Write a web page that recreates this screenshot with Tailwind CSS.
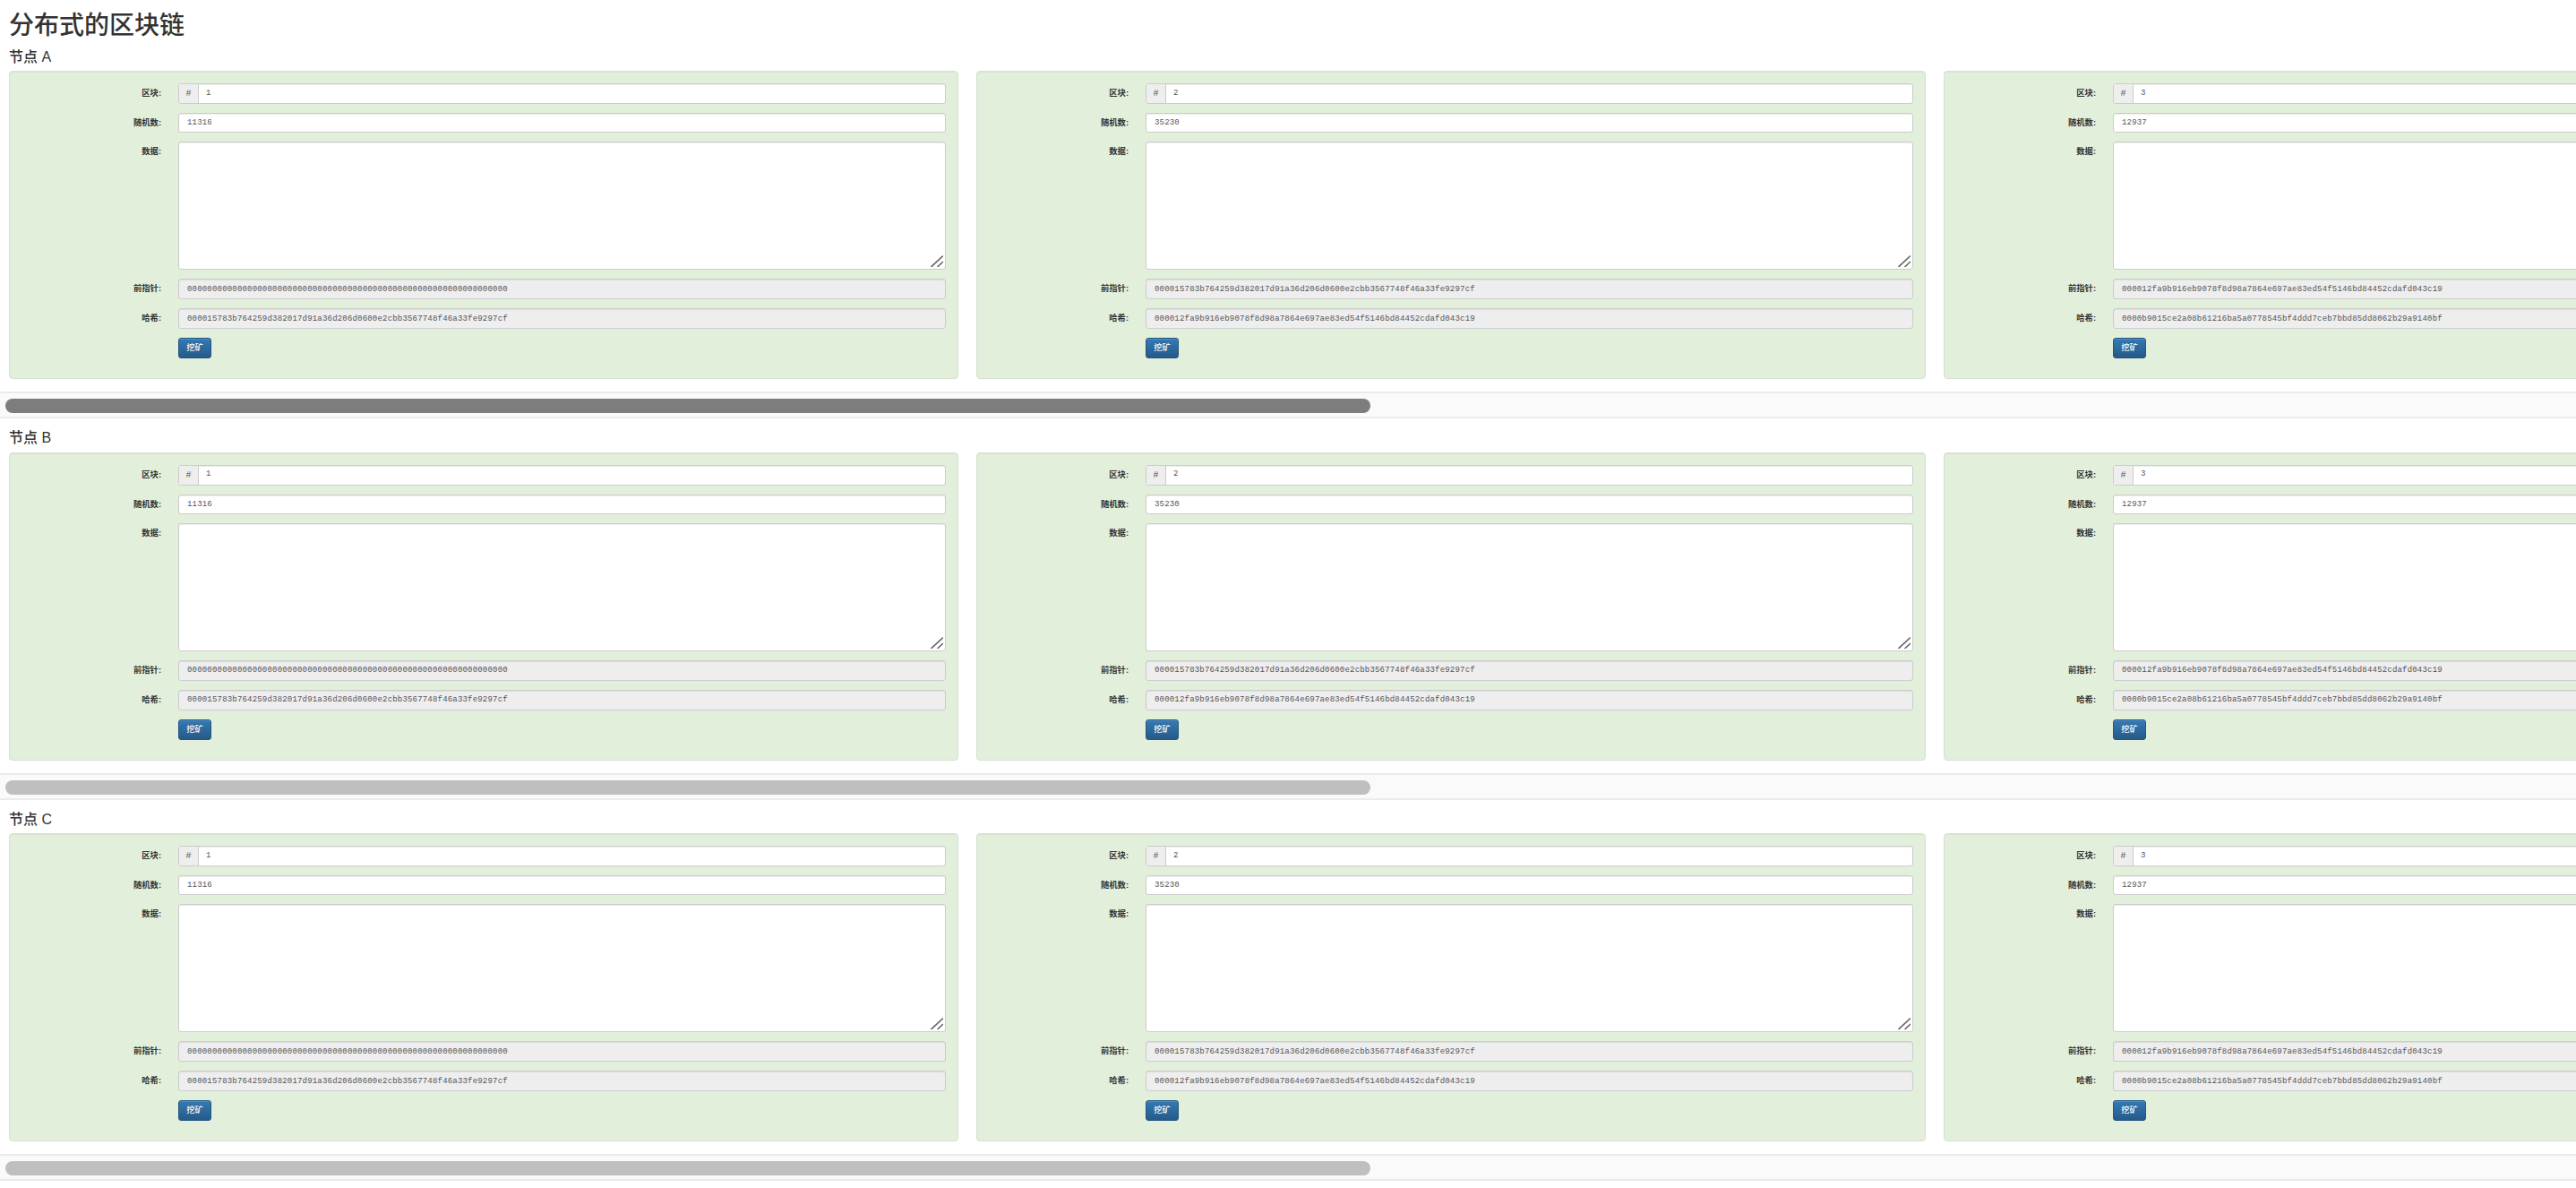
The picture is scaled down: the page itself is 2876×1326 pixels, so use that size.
<!DOCTYPE html>
<html lang="zh">
<head>
    <meta charset="UTF-8">
    <title>分布式的区块链</title>
    <script src="https://cdn.jsdelivr.net/npm/@tailwindcss/browser@4"></script>
</head>
<body class="bg-white text-[#333] overflow-hidden font-['Liberation_Sans','Noto_Sans_CJK_SC',sans-serif]">

<h1 class="h-[41.5px] pl-[10px] pt-[12px] text-[28px] leading-[34px] font-medium">分布式的区块链</h1>

<!-- node A -->
<section>
    <h3 class="h-[37.5px] pl-[10px] pt-[12px] text-[16px] leading-[20px] font-medium">节点 A</h3>
    <div class="flex gap-[20px] overflow-hidden pl-[10px] pb-[14px]">

        <div class="w-[1060px] h-[344px] shrink-0 flex flex-col gap-[10px] pt-[13px] pr-[13px] bg-[#e2efda] border border-[#d8dfd3] rounded-[4px] shadow-[inset_0_1px_1px_rgba(0,0,0,0.05)]">
            <div class="flex gap-[19px]">
                <label class="w-[169px] h-[23px] leading-[23px] text-right text-[9.33px] font-semibold">区块:</label>
                <div class="flex-1 flex h-[23px] border border-[#ccc] rounded-[3px] bg-white overflow-hidden shadow-[inset_0_1px_1px_rgba(0,0,0,0.075)]">
                    <span class="w-[22px] border-r border-[#ccc] bg-[#eee] text-center leading-[21px] text-[10px] font-['Liberation_Mono',monospace] text-[#555]">#</span>
                    <input class="flex-1 px-[8px] text-[9px] tracking-[0.19px] font-['Liberation_Mono',monospace] text-[#555]" value="1">
                </div>
            </div>
            <div class="flex gap-[19px]">
                <label class="w-[169px] h-[22px] leading-[22px] text-right text-[9.33px] font-semibold">随机数:</label>
                <input class="flex-1 h-[22px] px-[9px] bg-white border border-[#ccc] rounded-[3px] text-[9px] tracking-[0.19px] font-['Liberation_Mono',monospace] text-[#555] shadow-[inset_0_1px_1px_rgba(0,0,0,0.075)]" value="11316">
            </div>
            <div class="flex gap-[19px]">
                <label class="w-[169px] h-[23px] leading-[23px] text-right text-[9.33px] font-semibold">数据:</label>
                <div class="relative flex-1 h-[143px]">
                    <textarea class="block w-full h-full resize-none px-[9px] bg-white border border-[#ccc] rounded-[3px] shadow-[inset_0_1px_1px_rgba(0,0,0,0.075)]"></textarea>
                    <svg class="absolute right-[3px] bottom-[3px]" width="14" height="13" viewBox="0 0 14 13" fill="none" stroke="#666" stroke-width="1.6"><path d="M0.5 13 L14 0.5"/><path d="M7.5 13 L14 7"/></svg>
                </div>
            </div>
            <div class="flex gap-[19px]">
                <label class="w-[169px] h-[23px] leading-[23px] text-right text-[9.33px] font-semibold">前指针:</label>
                <input readonly class="flex-1 h-[23px] px-[9px] bg-[#eee] border border-[#ccc] rounded-[3px] text-[9px] tracking-[0.19px] font-['Liberation_Mono',monospace] text-[#555] shadow-[inset_0_1px_1px_rgba(0,0,0,0.075)]" value="0000000000000000000000000000000000000000000000000000000000000000">
            </div>
            <div class="flex gap-[19px]">
                <label class="w-[169px] h-[23px] leading-[23px] text-right text-[9.33px] font-semibold">哈希:</label>
                <input readonly class="flex-1 h-[23px] px-[9px] bg-[#eee] border border-[#ccc] rounded-[3px] text-[9px] tracking-[0.19px] font-['Liberation_Mono',monospace] text-[#555] shadow-[inset_0_1px_1px_rgba(0,0,0,0.075)]" value="000015783b764259d382017d91a36d206d0600e2cbb3567748f46a33fe9297cf">
            </div>
            <div class="pl-[188px]">
                <button class="block w-[37px] h-[23px] rounded-[3px] border border-[#245580] bg-gradient-to-b from-[#337ab7] to-[#265a88] text-white text-[9.33px] font-medium leading-[21px] [text-shadow:0_-1px_0_rgba(0,0,0,0.2)] shadow-[inset_0_1px_0_rgba(255,255,255,0.15)]">挖矿</button>
            </div>
        </div>

        <div class="w-[1060px] h-[344px] shrink-0 flex flex-col gap-[10px] pt-[13px] pr-[13px] bg-[#e2efda] border border-[#d8dfd3] rounded-[4px] shadow-[inset_0_1px_1px_rgba(0,0,0,0.05)]">
            <div class="flex gap-[19px]">
                <label class="w-[169px] h-[23px] leading-[23px] text-right text-[9.33px] font-semibold">区块:</label>
                <div class="flex-1 flex h-[23px] border border-[#ccc] rounded-[3px] bg-white overflow-hidden shadow-[inset_0_1px_1px_rgba(0,0,0,0.075)]">
                    <span class="w-[22px] border-r border-[#ccc] bg-[#eee] text-center leading-[21px] text-[10px] font-['Liberation_Mono',monospace] text-[#555]">#</span>
                    <input class="flex-1 px-[8px] text-[9px] tracking-[0.19px] font-['Liberation_Mono',monospace] text-[#555]" value="2">
                </div>
            </div>
            <div class="flex gap-[19px]">
                <label class="w-[169px] h-[22px] leading-[22px] text-right text-[9.33px] font-semibold">随机数:</label>
                <input class="flex-1 h-[22px] px-[9px] bg-white border border-[#ccc] rounded-[3px] text-[9px] tracking-[0.19px] font-['Liberation_Mono',monospace] text-[#555] shadow-[inset_0_1px_1px_rgba(0,0,0,0.075)]" value="35230">
            </div>
            <div class="flex gap-[19px]">
                <label class="w-[169px] h-[23px] leading-[23px] text-right text-[9.33px] font-semibold">数据:</label>
                <div class="relative flex-1 h-[143px]">
                    <textarea class="block w-full h-full resize-none px-[9px] bg-white border border-[#ccc] rounded-[3px] shadow-[inset_0_1px_1px_rgba(0,0,0,0.075)]"></textarea>
                    <svg class="absolute right-[3px] bottom-[3px]" width="14" height="13" viewBox="0 0 14 13" fill="none" stroke="#666" stroke-width="1.6"><path d="M0.5 13 L14 0.5"/><path d="M7.5 13 L14 7"/></svg>
                </div>
            </div>
            <div class="flex gap-[19px]">
                <label class="w-[169px] h-[23px] leading-[23px] text-right text-[9.33px] font-semibold">前指针:</label>
                <input readonly class="flex-1 h-[23px] px-[9px] bg-[#eee] border border-[#ccc] rounded-[3px] text-[9px] tracking-[0.19px] font-['Liberation_Mono',monospace] text-[#555] shadow-[inset_0_1px_1px_rgba(0,0,0,0.075)]" value="000015783b764259d382017d91a36d206d0600e2cbb3567748f46a33fe9297cf">
            </div>
            <div class="flex gap-[19px]">
                <label class="w-[169px] h-[23px] leading-[23px] text-right text-[9.33px] font-semibold">哈希:</label>
                <input readonly class="flex-1 h-[23px] px-[9px] bg-[#eee] border border-[#ccc] rounded-[3px] text-[9px] tracking-[0.19px] font-['Liberation_Mono',monospace] text-[#555] shadow-[inset_0_1px_1px_rgba(0,0,0,0.075)]" value="000012fa9b916eb9078f8d98a7864e697ae83ed54f5146bd84452cdafd043c19">
            </div>
            <div class="pl-[188px]">
                <button class="block w-[37px] h-[23px] rounded-[3px] border border-[#245580] bg-gradient-to-b from-[#337ab7] to-[#265a88] text-white text-[9.33px] font-medium leading-[21px] [text-shadow:0_-1px_0_rgba(0,0,0,0.2)] shadow-[inset_0_1px_0_rgba(255,255,255,0.15)]">挖矿</button>
            </div>
        </div>

        <div class="w-[1060px] h-[344px] shrink-0 flex flex-col gap-[10px] pt-[13px] pr-[13px] bg-[#e2efda] border border-[#d8dfd3] rounded-[4px] shadow-[inset_0_1px_1px_rgba(0,0,0,0.05)]">
            <div class="flex gap-[19px]">
                <label class="w-[169px] h-[23px] leading-[23px] text-right text-[9.33px] font-semibold">区块:</label>
                <div class="flex-1 flex h-[23px] border border-[#ccc] rounded-[3px] bg-white overflow-hidden shadow-[inset_0_1px_1px_rgba(0,0,0,0.075)]">
                    <span class="w-[22px] border-r border-[#ccc] bg-[#eee] text-center leading-[21px] text-[10px] font-['Liberation_Mono',monospace] text-[#555]">#</span>
                    <input class="flex-1 px-[8px] text-[9px] tracking-[0.19px] font-['Liberation_Mono',monospace] text-[#555]" value="3">
                </div>
            </div>
            <div class="flex gap-[19px]">
                <label class="w-[169px] h-[22px] leading-[22px] text-right text-[9.33px] font-semibold">随机数:</label>
                <input class="flex-1 h-[22px] px-[9px] bg-white border border-[#ccc] rounded-[3px] text-[9px] tracking-[0.19px] font-['Liberation_Mono',monospace] text-[#555] shadow-[inset_0_1px_1px_rgba(0,0,0,0.075)]" value="12937">
            </div>
            <div class="flex gap-[19px]">
                <label class="w-[169px] h-[23px] leading-[23px] text-right text-[9.33px] font-semibold">数据:</label>
                <div class="relative flex-1 h-[143px]">
                    <textarea class="block w-full h-full resize-none px-[9px] bg-white border border-[#ccc] rounded-[3px] shadow-[inset_0_1px_1px_rgba(0,0,0,0.075)]"></textarea>
                    <svg class="absolute right-[3px] bottom-[3px]" width="14" height="13" viewBox="0 0 14 13" fill="none" stroke="#666" stroke-width="1.6"><path d="M0.5 13 L14 0.5"/><path d="M7.5 13 L14 7"/></svg>
                </div>
            </div>
            <div class="flex gap-[19px]">
                <label class="w-[169px] h-[23px] leading-[23px] text-right text-[9.33px] font-semibold">前指针:</label>
                <input readonly class="flex-1 h-[23px] px-[9px] bg-[#eee] border border-[#ccc] rounded-[3px] text-[9px] tracking-[0.19px] font-['Liberation_Mono',monospace] text-[#555] shadow-[inset_0_1px_1px_rgba(0,0,0,0.075)]" value="000012fa9b916eb9078f8d98a7864e697ae83ed54f5146bd84452cdafd043c19">
            </div>
            <div class="flex gap-[19px]">
                <label class="w-[169px] h-[23px] leading-[23px] text-right text-[9.33px] font-semibold">哈希:</label>
                <input readonly class="flex-1 h-[23px] px-[9px] bg-[#eee] border border-[#ccc] rounded-[3px] text-[9px] tracking-[0.19px] font-['Liberation_Mono',monospace] text-[#555] shadow-[inset_0_1px_1px_rgba(0,0,0,0.075)]" value="0000b9015ce2a08b61216ba5a0778545bf4ddd7ceb7bbd85dd8062b29a9140bf">
            </div>
            <div class="pl-[188px]">
                <button class="block w-[37px] h-[23px] rounded-[3px] border border-[#245580] bg-gradient-to-b from-[#337ab7] to-[#265a88] text-white text-[9.33px] font-medium leading-[21px] [text-shadow:0_-1px_0_rgba(0,0,0,0.2)] shadow-[inset_0_1px_0_rgba(255,255,255,0.15)]">挖矿</button>
            </div>
        </div>

    </div>
    <!-- scrollbar -->
    <div class="h-[30px] py-[6px] pl-[6px] bg-[#fafafa] border-y-2 border-[#ebebeb]">
        <div class="w-[1524px] h-[16px] rounded-[8px] bg-[#7d7d7d]"></div>
    </div>
</section>

<!-- node B -->
<section>
    <h3 class="h-[37.5px] pl-[10px] pt-[12px] text-[16px] leading-[20px] font-medium">节点 B</h3>
    <div class="flex gap-[20px] overflow-hidden pl-[10px] pb-[14px]">

        <div class="w-[1060px] h-[344px] shrink-0 flex flex-col gap-[10px] pt-[13px] pr-[13px] bg-[#e2efda] border border-[#d8dfd3] rounded-[4px] shadow-[inset_0_1px_1px_rgba(0,0,0,0.05)]">
            <div class="flex gap-[19px]">
                <label class="w-[169px] h-[23px] leading-[23px] text-right text-[9.33px] font-semibold">区块:</label>
                <div class="flex-1 flex h-[23px] border border-[#ccc] rounded-[3px] bg-white overflow-hidden shadow-[inset_0_1px_1px_rgba(0,0,0,0.075)]">
                    <span class="w-[22px] border-r border-[#ccc] bg-[#eee] text-center leading-[21px] text-[10px] font-['Liberation_Mono',monospace] text-[#555]">#</span>
                    <input class="flex-1 px-[8px] text-[9px] tracking-[0.19px] font-['Liberation_Mono',monospace] text-[#555]" value="1">
                </div>
            </div>
            <div class="flex gap-[19px]">
                <label class="w-[169px] h-[22px] leading-[22px] text-right text-[9.33px] font-semibold">随机数:</label>
                <input class="flex-1 h-[22px] px-[9px] bg-white border border-[#ccc] rounded-[3px] text-[9px] tracking-[0.19px] font-['Liberation_Mono',monospace] text-[#555] shadow-[inset_0_1px_1px_rgba(0,0,0,0.075)]" value="11316">
            </div>
            <div class="flex gap-[19px]">
                <label class="w-[169px] h-[23px] leading-[23px] text-right text-[9.33px] font-semibold">数据:</label>
                <div class="relative flex-1 h-[143px]">
                    <textarea class="block w-full h-full resize-none px-[9px] bg-white border border-[#ccc] rounded-[3px] shadow-[inset_0_1px_1px_rgba(0,0,0,0.075)]"></textarea>
                    <svg class="absolute right-[3px] bottom-[3px]" width="14" height="13" viewBox="0 0 14 13" fill="none" stroke="#666" stroke-width="1.6"><path d="M0.5 13 L14 0.5"/><path d="M7.5 13 L14 7"/></svg>
                </div>
            </div>
            <div class="flex gap-[19px]">
                <label class="w-[169px] h-[23px] leading-[23px] text-right text-[9.33px] font-semibold">前指针:</label>
                <input readonly class="flex-1 h-[23px] px-[9px] bg-[#eee] border border-[#ccc] rounded-[3px] text-[9px] tracking-[0.19px] font-['Liberation_Mono',monospace] text-[#555] shadow-[inset_0_1px_1px_rgba(0,0,0,0.075)]" value="0000000000000000000000000000000000000000000000000000000000000000">
            </div>
            <div class="flex gap-[19px]">
                <label class="w-[169px] h-[23px] leading-[23px] text-right text-[9.33px] font-semibold">哈希:</label>
                <input readonly class="flex-1 h-[23px] px-[9px] bg-[#eee] border border-[#ccc] rounded-[3px] text-[9px] tracking-[0.19px] font-['Liberation_Mono',monospace] text-[#555] shadow-[inset_0_1px_1px_rgba(0,0,0,0.075)]" value="000015783b764259d382017d91a36d206d0600e2cbb3567748f46a33fe9297cf">
            </div>
            <div class="pl-[188px]">
                <button class="block w-[37px] h-[23px] rounded-[3px] border border-[#245580] bg-gradient-to-b from-[#337ab7] to-[#265a88] text-white text-[9.33px] font-medium leading-[21px] [text-shadow:0_-1px_0_rgba(0,0,0,0.2)] shadow-[inset_0_1px_0_rgba(255,255,255,0.15)]">挖矿</button>
            </div>
        </div>

        <div class="w-[1060px] h-[344px] shrink-0 flex flex-col gap-[10px] pt-[13px] pr-[13px] bg-[#e2efda] border border-[#d8dfd3] rounded-[4px] shadow-[inset_0_1px_1px_rgba(0,0,0,0.05)]">
            <div class="flex gap-[19px]">
                <label class="w-[169px] h-[23px] leading-[23px] text-right text-[9.33px] font-semibold">区块:</label>
                <div class="flex-1 flex h-[23px] border border-[#ccc] rounded-[3px] bg-white overflow-hidden shadow-[inset_0_1px_1px_rgba(0,0,0,0.075)]">
                    <span class="w-[22px] border-r border-[#ccc] bg-[#eee] text-center leading-[21px] text-[10px] font-['Liberation_Mono',monospace] text-[#555]">#</span>
                    <input class="flex-1 px-[8px] text-[9px] tracking-[0.19px] font-['Liberation_Mono',monospace] text-[#555]" value="2">
                </div>
            </div>
            <div class="flex gap-[19px]">
                <label class="w-[169px] h-[22px] leading-[22px] text-right text-[9.33px] font-semibold">随机数:</label>
                <input class="flex-1 h-[22px] px-[9px] bg-white border border-[#ccc] rounded-[3px] text-[9px] tracking-[0.19px] font-['Liberation_Mono',monospace] text-[#555] shadow-[inset_0_1px_1px_rgba(0,0,0,0.075)]" value="35230">
            </div>
            <div class="flex gap-[19px]">
                <label class="w-[169px] h-[23px] leading-[23px] text-right text-[9.33px] font-semibold">数据:</label>
                <div class="relative flex-1 h-[143px]">
                    <textarea class="block w-full h-full resize-none px-[9px] bg-white border border-[#ccc] rounded-[3px] shadow-[inset_0_1px_1px_rgba(0,0,0,0.075)]"></textarea>
                    <svg class="absolute right-[3px] bottom-[3px]" width="14" height="13" viewBox="0 0 14 13" fill="none" stroke="#666" stroke-width="1.6"><path d="M0.5 13 L14 0.5"/><path d="M7.5 13 L14 7"/></svg>
                </div>
            </div>
            <div class="flex gap-[19px]">
                <label class="w-[169px] h-[23px] leading-[23px] text-right text-[9.33px] font-semibold">前指针:</label>
                <input readonly class="flex-1 h-[23px] px-[9px] bg-[#eee] border border-[#ccc] rounded-[3px] text-[9px] tracking-[0.19px] font-['Liberation_Mono',monospace] text-[#555] shadow-[inset_0_1px_1px_rgba(0,0,0,0.075)]" value="000015783b764259d382017d91a36d206d0600e2cbb3567748f46a33fe9297cf">
            </div>
            <div class="flex gap-[19px]">
                <label class="w-[169px] h-[23px] leading-[23px] text-right text-[9.33px] font-semibold">哈希:</label>
                <input readonly class="flex-1 h-[23px] px-[9px] bg-[#eee] border border-[#ccc] rounded-[3px] text-[9px] tracking-[0.19px] font-['Liberation_Mono',monospace] text-[#555] shadow-[inset_0_1px_1px_rgba(0,0,0,0.075)]" value="000012fa9b916eb9078f8d98a7864e697ae83ed54f5146bd84452cdafd043c19">
            </div>
            <div class="pl-[188px]">
                <button class="block w-[37px] h-[23px] rounded-[3px] border border-[#245580] bg-gradient-to-b from-[#337ab7] to-[#265a88] text-white text-[9.33px] font-medium leading-[21px] [text-shadow:0_-1px_0_rgba(0,0,0,0.2)] shadow-[inset_0_1px_0_rgba(255,255,255,0.15)]">挖矿</button>
            </div>
        </div>

        <div class="w-[1060px] h-[344px] shrink-0 flex flex-col gap-[10px] pt-[13px] pr-[13px] bg-[#e2efda] border border-[#d8dfd3] rounded-[4px] shadow-[inset_0_1px_1px_rgba(0,0,0,0.05)]">
            <div class="flex gap-[19px]">
                <label class="w-[169px] h-[23px] leading-[23px] text-right text-[9.33px] font-semibold">区块:</label>
                <div class="flex-1 flex h-[23px] border border-[#ccc] rounded-[3px] bg-white overflow-hidden shadow-[inset_0_1px_1px_rgba(0,0,0,0.075)]">
                    <span class="w-[22px] border-r border-[#ccc] bg-[#eee] text-center leading-[21px] text-[10px] font-['Liberation_Mono',monospace] text-[#555]">#</span>
                    <input class="flex-1 px-[8px] text-[9px] tracking-[0.19px] font-['Liberation_Mono',monospace] text-[#555]" value="3">
                </div>
            </div>
            <div class="flex gap-[19px]">
                <label class="w-[169px] h-[22px] leading-[22px] text-right text-[9.33px] font-semibold">随机数:</label>
                <input class="flex-1 h-[22px] px-[9px] bg-white border border-[#ccc] rounded-[3px] text-[9px] tracking-[0.19px] font-['Liberation_Mono',monospace] text-[#555] shadow-[inset_0_1px_1px_rgba(0,0,0,0.075)]" value="12937">
            </div>
            <div class="flex gap-[19px]">
                <label class="w-[169px] h-[23px] leading-[23px] text-right text-[9.33px] font-semibold">数据:</label>
                <div class="relative flex-1 h-[143px]">
                    <textarea class="block w-full h-full resize-none px-[9px] bg-white border border-[#ccc] rounded-[3px] shadow-[inset_0_1px_1px_rgba(0,0,0,0.075)]"></textarea>
                    <svg class="absolute right-[3px] bottom-[3px]" width="14" height="13" viewBox="0 0 14 13" fill="none" stroke="#666" stroke-width="1.6"><path d="M0.5 13 L14 0.5"/><path d="M7.5 13 L14 7"/></svg>
                </div>
            </div>
            <div class="flex gap-[19px]">
                <label class="w-[169px] h-[23px] leading-[23px] text-right text-[9.33px] font-semibold">前指针:</label>
                <input readonly class="flex-1 h-[23px] px-[9px] bg-[#eee] border border-[#ccc] rounded-[3px] text-[9px] tracking-[0.19px] font-['Liberation_Mono',monospace] text-[#555] shadow-[inset_0_1px_1px_rgba(0,0,0,0.075)]" value="000012fa9b916eb9078f8d98a7864e697ae83ed54f5146bd84452cdafd043c19">
            </div>
            <div class="flex gap-[19px]">
                <label class="w-[169px] h-[23px] leading-[23px] text-right text-[9.33px] font-semibold">哈希:</label>
                <input readonly class="flex-1 h-[23px] px-[9px] bg-[#eee] border border-[#ccc] rounded-[3px] text-[9px] tracking-[0.19px] font-['Liberation_Mono',monospace] text-[#555] shadow-[inset_0_1px_1px_rgba(0,0,0,0.075)]" value="0000b9015ce2a08b61216ba5a0778545bf4ddd7ceb7bbd85dd8062b29a9140bf">
            </div>
            <div class="pl-[188px]">
                <button class="block w-[37px] h-[23px] rounded-[3px] border border-[#245580] bg-gradient-to-b from-[#337ab7] to-[#265a88] text-white text-[9.33px] font-medium leading-[21px] [text-shadow:0_-1px_0_rgba(0,0,0,0.2)] shadow-[inset_0_1px_0_rgba(255,255,255,0.15)]">挖矿</button>
            </div>
        </div>

    </div>
    <div class="h-[30px] py-[6px] pl-[6px] bg-[#fafafa] border-y-2 border-[#ebebeb]">
        <div class="w-[1524px] h-[16px] rounded-[8px] bg-[#bfbfbf]"></div>
    </div>
</section>

<!-- node C -->
<section>
    <h3 class="h-[37.5px] pl-[10px] pt-[12px] text-[16px] leading-[20px] font-medium">节点 C</h3>
    <div class="flex gap-[20px] overflow-hidden pl-[10px] pb-[14px]">

        <div class="w-[1060px] h-[344px] shrink-0 flex flex-col gap-[10px] pt-[13px] pr-[13px] bg-[#e2efda] border border-[#d8dfd3] rounded-[4px] shadow-[inset_0_1px_1px_rgba(0,0,0,0.05)]">
            <div class="flex gap-[19px]">
                <label class="w-[169px] h-[23px] leading-[23px] text-right text-[9.33px] font-semibold">区块:</label>
                <div class="flex-1 flex h-[23px] border border-[#ccc] rounded-[3px] bg-white overflow-hidden shadow-[inset_0_1px_1px_rgba(0,0,0,0.075)]">
                    <span class="w-[22px] border-r border-[#ccc] bg-[#eee] text-center leading-[21px] text-[10px] font-['Liberation_Mono',monospace] text-[#555]">#</span>
                    <input class="flex-1 px-[8px] text-[9px] tracking-[0.19px] font-['Liberation_Mono',monospace] text-[#555]" value="1">
                </div>
            </div>
            <div class="flex gap-[19px]">
                <label class="w-[169px] h-[22px] leading-[22px] text-right text-[9.33px] font-semibold">随机数:</label>
                <input class="flex-1 h-[22px] px-[9px] bg-white border border-[#ccc] rounded-[3px] text-[9px] tracking-[0.19px] font-['Liberation_Mono',monospace] text-[#555] shadow-[inset_0_1px_1px_rgba(0,0,0,0.075)]" value="11316">
            </div>
            <div class="flex gap-[19px]">
                <label class="w-[169px] h-[23px] leading-[23px] text-right text-[9.33px] font-semibold">数据:</label>
                <div class="relative flex-1 h-[143px]">
                    <textarea class="block w-full h-full resize-none px-[9px] bg-white border border-[#ccc] rounded-[3px] shadow-[inset_0_1px_1px_rgba(0,0,0,0.075)]"></textarea>
                    <svg class="absolute right-[3px] bottom-[3px]" width="14" height="13" viewBox="0 0 14 13" fill="none" stroke="#666" stroke-width="1.6"><path d="M0.5 13 L14 0.5"/><path d="M7.5 13 L14 7"/></svg>
                </div>
            </div>
            <div class="flex gap-[19px]">
                <label class="w-[169px] h-[23px] leading-[23px] text-right text-[9.33px] font-semibold">前指针:</label>
                <input readonly class="flex-1 h-[23px] px-[9px] bg-[#eee] border border-[#ccc] rounded-[3px] text-[9px] tracking-[0.19px] font-['Liberation_Mono',monospace] text-[#555] shadow-[inset_0_1px_1px_rgba(0,0,0,0.075)]" value="0000000000000000000000000000000000000000000000000000000000000000">
            </div>
            <div class="flex gap-[19px]">
                <label class="w-[169px] h-[23px] leading-[23px] text-right text-[9.33px] font-semibold">哈希:</label>
                <input readonly class="flex-1 h-[23px] px-[9px] bg-[#eee] border border-[#ccc] rounded-[3px] text-[9px] tracking-[0.19px] font-['Liberation_Mono',monospace] text-[#555] shadow-[inset_0_1px_1px_rgba(0,0,0,0.075)]" value="000015783b764259d382017d91a36d206d0600e2cbb3567748f46a33fe9297cf">
            </div>
            <div class="pl-[188px]">
                <button class="block w-[37px] h-[23px] rounded-[3px] border border-[#245580] bg-gradient-to-b from-[#337ab7] to-[#265a88] text-white text-[9.33px] font-medium leading-[21px] [text-shadow:0_-1px_0_rgba(0,0,0,0.2)] shadow-[inset_0_1px_0_rgba(255,255,255,0.15)]">挖矿</button>
            </div>
        </div>

        <div class="w-[1060px] h-[344px] shrink-0 flex flex-col gap-[10px] pt-[13px] pr-[13px] bg-[#e2efda] border border-[#d8dfd3] rounded-[4px] shadow-[inset_0_1px_1px_rgba(0,0,0,0.05)]">
            <div class="flex gap-[19px]">
                <label class="w-[169px] h-[23px] leading-[23px] text-right text-[9.33px] font-semibold">区块:</label>
                <div class="flex-1 flex h-[23px] border border-[#ccc] rounded-[3px] bg-white overflow-hidden shadow-[inset_0_1px_1px_rgba(0,0,0,0.075)]">
                    <span class="w-[22px] border-r border-[#ccc] bg-[#eee] text-center leading-[21px] text-[10px] font-['Liberation_Mono',monospace] text-[#555]">#</span>
                    <input class="flex-1 px-[8px] text-[9px] tracking-[0.19px] font-['Liberation_Mono',monospace] text-[#555]" value="2">
                </div>
            </div>
            <div class="flex gap-[19px]">
                <label class="w-[169px] h-[22px] leading-[22px] text-right text-[9.33px] font-semibold">随机数:</label>
                <input class="flex-1 h-[22px] px-[9px] bg-white border border-[#ccc] rounded-[3px] text-[9px] tracking-[0.19px] font-['Liberation_Mono',monospace] text-[#555] shadow-[inset_0_1px_1px_rgba(0,0,0,0.075)]" value="35230">
            </div>
            <div class="flex gap-[19px]">
                <label class="w-[169px] h-[23px] leading-[23px] text-right text-[9.33px] font-semibold">数据:</label>
                <div class="relative flex-1 h-[143px]">
                    <textarea class="block w-full h-full resize-none px-[9px] bg-white border border-[#ccc] rounded-[3px] shadow-[inset_0_1px_1px_rgba(0,0,0,0.075)]"></textarea>
                    <svg class="absolute right-[3px] bottom-[3px]" width="14" height="13" viewBox="0 0 14 13" fill="none" stroke="#666" stroke-width="1.6"><path d="M0.5 13 L14 0.5"/><path d="M7.5 13 L14 7"/></svg>
                </div>
            </div>
            <div class="flex gap-[19px]">
                <label class="w-[169px] h-[23px] leading-[23px] text-right text-[9.33px] font-semibold">前指针:</label>
                <input readonly class="flex-1 h-[23px] px-[9px] bg-[#eee] border border-[#ccc] rounded-[3px] text-[9px] tracking-[0.19px] font-['Liberation_Mono',monospace] text-[#555] shadow-[inset_0_1px_1px_rgba(0,0,0,0.075)]" value="000015783b764259d382017d91a36d206d0600e2cbb3567748f46a33fe9297cf">
            </div>
            <div class="flex gap-[19px]">
                <label class="w-[169px] h-[23px] leading-[23px] text-right text-[9.33px] font-semibold">哈希:</label>
                <input readonly class="flex-1 h-[23px] px-[9px] bg-[#eee] border border-[#ccc] rounded-[3px] text-[9px] tracking-[0.19px] font-['Liberation_Mono',monospace] text-[#555] shadow-[inset_0_1px_1px_rgba(0,0,0,0.075)]" value="000012fa9b916eb9078f8d98a7864e697ae83ed54f5146bd84452cdafd043c19">
            </div>
            <div class="pl-[188px]">
                <button class="block w-[37px] h-[23px] rounded-[3px] border border-[#245580] bg-gradient-to-b from-[#337ab7] to-[#265a88] text-white text-[9.33px] font-medium leading-[21px] [text-shadow:0_-1px_0_rgba(0,0,0,0.2)] shadow-[inset_0_1px_0_rgba(255,255,255,0.15)]">挖矿</button>
            </div>
        </div>

        <div class="w-[1060px] h-[344px] shrink-0 flex flex-col gap-[10px] pt-[13px] pr-[13px] bg-[#e2efda] border border-[#d8dfd3] rounded-[4px] shadow-[inset_0_1px_1px_rgba(0,0,0,0.05)]">
            <div class="flex gap-[19px]">
                <label class="w-[169px] h-[23px] leading-[23px] text-right text-[9.33px] font-semibold">区块:</label>
                <div class="flex-1 flex h-[23px] border border-[#ccc] rounded-[3px] bg-white overflow-hidden shadow-[inset_0_1px_1px_rgba(0,0,0,0.075)]">
                    <span class="w-[22px] border-r border-[#ccc] bg-[#eee] text-center leading-[21px] text-[10px] font-['Liberation_Mono',monospace] text-[#555]">#</span>
                    <input class="flex-1 px-[8px] text-[9px] tracking-[0.19px] font-['Liberation_Mono',monospace] text-[#555]" value="3">
                </div>
            </div>
            <div class="flex gap-[19px]">
                <label class="w-[169px] h-[22px] leading-[22px] text-right text-[9.33px] font-semibold">随机数:</label>
                <input class="flex-1 h-[22px] px-[9px] bg-white border border-[#ccc] rounded-[3px] text-[9px] tracking-[0.19px] font-['Liberation_Mono',monospace] text-[#555] shadow-[inset_0_1px_1px_rgba(0,0,0,0.075)]" value="12937">
            </div>
            <div class="flex gap-[19px]">
                <label class="w-[169px] h-[23px] leading-[23px] text-right text-[9.33px] font-semibold">数据:</label>
                <div class="relative flex-1 h-[143px]">
                    <textarea class="block w-full h-full resize-none px-[9px] bg-white border border-[#ccc] rounded-[3px] shadow-[inset_0_1px_1px_rgba(0,0,0,0.075)]"></textarea>
                    <svg class="absolute right-[3px] bottom-[3px]" width="14" height="13" viewBox="0 0 14 13" fill="none" stroke="#666" stroke-width="1.6"><path d="M0.5 13 L14 0.5"/><path d="M7.5 13 L14 7"/></svg>
                </div>
            </div>
            <div class="flex gap-[19px]">
                <label class="w-[169px] h-[23px] leading-[23px] text-right text-[9.33px] font-semibold">前指针:</label>
                <input readonly class="flex-1 h-[23px] px-[9px] bg-[#eee] border border-[#ccc] rounded-[3px] text-[9px] tracking-[0.19px] font-['Liberation_Mono',monospace] text-[#555] shadow-[inset_0_1px_1px_rgba(0,0,0,0.075)]" value="000012fa9b916eb9078f8d98a7864e697ae83ed54f5146bd84452cdafd043c19">
            </div>
            <div class="flex gap-[19px]">
                <label class="w-[169px] h-[23px] leading-[23px] text-right text-[9.33px] font-semibold">哈希:</label>
                <input readonly class="flex-1 h-[23px] px-[9px] bg-[#eee] border border-[#ccc] rounded-[3px] text-[9px] tracking-[0.19px] font-['Liberation_Mono',monospace] text-[#555] shadow-[inset_0_1px_1px_rgba(0,0,0,0.075)]" value="0000b9015ce2a08b61216ba5a0778545bf4ddd7ceb7bbd85dd8062b29a9140bf">
            </div>
            <div class="pl-[188px]">
                <button class="block w-[37px] h-[23px] rounded-[3px] border border-[#245580] bg-gradient-to-b from-[#337ab7] to-[#265a88] text-white text-[9.33px] font-medium leading-[21px] [text-shadow:0_-1px_0_rgba(0,0,0,0.2)] shadow-[inset_0_1px_0_rgba(255,255,255,0.15)]">挖矿</button>
            </div>
        </div>

    </div>
    <div class="h-[30px] py-[6px] pl-[6px] bg-[#fafafa] border-y-2 border-[#ebebeb]">
        <div class="w-[1524px] h-[16px] rounded-[8px] bg-[#bfbfbf]"></div>
    </div>
</section>

</body>
</html>
